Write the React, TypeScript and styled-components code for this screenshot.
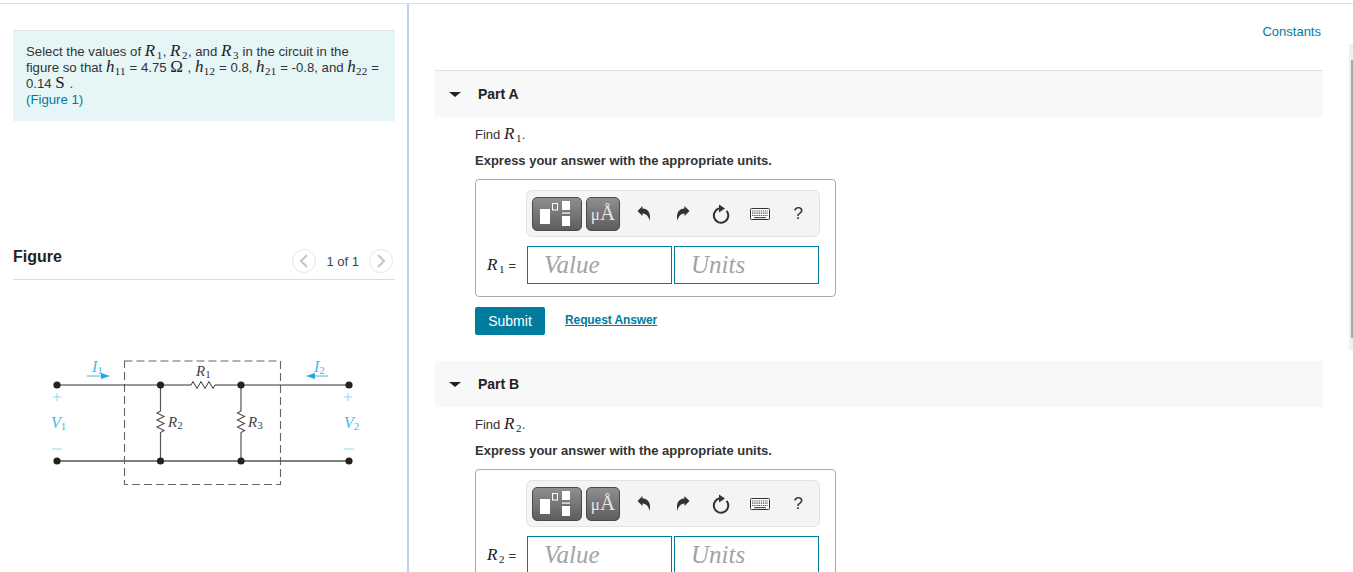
import React from 'react';
import styled, { createGlobalStyle } from 'styled-components';

const Global = createGlobalStyle`
  html, body { margin: 0; padding: 0; height: 572px; overflow: hidden; background: #fff; }
  body { font-family: "Liberation Sans", Arial, sans-serif; font-size: 13px; color: #333; }
`;

const Page = styled.div`
  position: relative;
  width: 1353px;
  height: 572px;
  overflow: hidden;
  padding-top: 3px;
  box-sizing: border-box;
`;
const Columns = styled.div`
  display: flex;
  height: 569px;
  border-top: 1px solid #dfdfdf;
`;
const LeftPane = styled.aside`
  width: 382px;
  flex: none;
  padding: 26px 12px 0 13px;
  border-right: 2px solid #bfd3e6;
  overflow: hidden;
`;
const Instructions = styled.div`
  height: 77px;
  padding: 13px 0 0 13px;
  border-top: 1px solid #dfe5e6;
  background: #e6f5f6;
  line-height: 16px;
  font-size: 13.2px;
  white-space: nowrap;
  color: #333;
`;
const TextLink = styled.a`
  color: #007c9e;
`;
const FigureHeader = styled.div`
  display: flex;
  align-items: center;
  justify-content: space-between;
  height: 35px;
  margin-top: 124px;
  border-bottom: 1px solid #dcdcdc;
  box-sizing: border-box;
`;
const FigureTitle = styled.h2`
  margin: 0 0 11px;
  font-size: 16px;
  line-height: 20px;
  font-weight: 700;
  color: #222;
`;
const Pager = styled.div`
  display: flex;
  align-items: center;
  gap: 10px;
  margin: 0 2px 2px 0;
  color: #2a4a5e;
  font-size: 13px;
`;
const PagerButton = styled.span`
  width: 22px;
  height: 22px;
  border: 1.5px solid #e6e6e6;
  border-radius: 50%;
  display: flex;
  align-items: center;
  justify-content: center;
`;
const CircuitFigure = styled.svg`
  display: block;
  margin-top: 65px;
`;
const RightPane = styled.main`
  flex: 1;
  padding: 0 30px 0 26px;
  overflow: hidden;
`;
const ConstantsRow = styled.div`
  height: 66px;
  padding: 20px 2px 0 0;
  box-sizing: border-box;
  text-align: right;
  line-height: 16px;
  font-size: 13px;
  color: #007c9e;
`;
const PartHeader = styled.div<{ $ruled?: boolean }>`
  display: flex;
  align-items: center;
  height: 46px;
  background: #f8f8f8;
  border-top: ${p => (p.$ruled ? '1px solid #dfdfdf' : 'none')};
  font-size: 14px;
  font-weight: 700;
  color: #222;
`;
const Caret = styled.span`
  width: 0;
  height: 0;
  margin: 0 17px 0 14px;
  border-left: 6px solid transparent;
  border-right: 6px solid transparent;
  border-top: 5px solid #222;
`;
const PartBody = styled.section`
  padding: 10px 0 26px 40px;
`;
const Line = styled.p<{ $bold?: boolean }>`
  margin: 0 0 10px;
  line-height: 16px;
  font-size: 13px;
  font-weight: ${p => (p.$bold ? 700 : 400)};
  color: #333;
`;
const AnswerBox = styled.div`
  width: 361px;
  height: 118px;
  margin-top: 10px;
  padding: 10px 0 0;
  box-sizing: border-box;
  border: 1px solid #aaa;
  border-radius: 4px;
`;
const Toolbar = styled.div`
  display: flex;
  align-items: center;
  width: 294px;
  height: 47px;
  margin-left: 50px;
  box-sizing: border-box;
  padding-left: 5px;
  background: #f4f4f4;
  border: 1px solid #e3e3e3;
  border-radius: 6px;
`;
const TemplateButton = styled.span<{ $w: number }>`
  display: flex;
  align-items: center;
  justify-content: center;
  width: ${p => p.$w}px;
  height: 34px;
  margin-right: 4px;
  box-sizing: border-box;
  border: 1px solid #4a4a4a;
  border-radius: 5px;
  background: linear-gradient(#8f8f8f, #5d5d5d);
  color: #e6e6e6;
  font-family: "Liberation Serif", serif;
  font-size: 21px;
`;
const Micro = styled.span`
  font-size: 17px;
  padding-top: 3px;
`;
const ToolGroup = styled.div`
  display: flex;
  align-items: center;
  margin-left: 1px;
`;
const ToolIcon = styled.span`
  width: 38.5px;
  display: flex;
  justify-content: center;
  align-items: center;
  font-size: 17px;
  color: #333;
`;
const AnswerRow = styled.div`
  display: flex;
  align-items: center;
  gap: 2px;
  margin: 9px 0 0 11px;
`;
const AnswerLabel = styled.span`
  width: 38px;
  font-size: 13px;
  color: #333;
  white-space: nowrap;
`;
const Field = styled.div`
  width: 145px;
  height: 38px;
  box-sizing: border-box;
  border: 1px solid #007c9e;
  padding-left: 16px;
  font: italic 25px/35px "Liberation Serif", serif;
  color: #a3a3a3;
`;
const Actions = styled.div`
  display: flex;
  align-items: center;
  gap: 20px;
  margin-top: 10px;
`;
const SubmitButton = styled.span`
  width: 70px;
  height: 28px;
  background: #007c9e;
  border-radius: 2px;
  color: #fff;
  font-size: 14px;
  line-height: 28px;
  text-align: center;
`;
const RequestLink = styled.a`
  margin-top: -2px;
  font-size: 12px;
  letter-spacing: -0.1px;
  font-weight: 700;
  text-decoration: underline;
  color: #007c9e;
`;
const MathVar = styled.span<{ $tight?: boolean }>`
  font: italic 17px/0 "Liberation Serif", serif;
  letter-spacing: ${p => (p.$tight ? '0.3px' : '1.7px')};
  color: #222;
  sub { font: normal 11px/0 "Liberation Serif", serif; letter-spacing: 0.3px; vertical-align: -3px; }
`;
const MathRoman = styled.span`
  font: 17px/0 "Liberation Serif", serif;
  letter-spacing: 1px;
  color: #222;
`;
const ScrollTrack = styled.div`
  position: absolute;
  top: 44px;
  right: 0;
  width: 4px;
  height: 306px;
  background: #f0f0f0;
`;
const ScrollThumb = styled.div`
  position: absolute;
  top: 16px;
  right: 0;
  width: 2px;
  height: 278px;
  background: #a8a8a8;
`;

const V = ({ n, s }: { n: string; s?: string }) => (
  <MathVar $tight={n === 'h'}>{n}{s && <sub>{s}</sub>}</MathVar>
);

const Chevron = ({ dir }: { dir: 'l' | 'r' }) => (
  <svg width="10" height="14" viewBox="0 0 10 14" fill="none" stroke="#c4c4c4" strokeWidth="2">
    <path d={dir === 'l' ? 'M8 1 L2 7 L8 13' : 'M2 1 L8 7 L2 13'} />
  </svg>
);

const Undo = ({ flip }: { flip?: boolean }) => (
  <svg width="16" height="17" viewBox="0 0 16 17" style={flip ? { transform: 'scaleX(-1)' } : undefined}>
    <path fill="#333" d="M1.5 6 L6.5 1 V3.6 C11.5 3.6 15.5 7.5 13.5 16 C13 12.5 11 9 6.5 8.6 V11 Z" />
  </svg>
);

const Reset = () => (
  <svg width="18" height="20" viewBox="0 0 18 20" fill="none">
    <path d="M9 4.3 A7.2 7.2 0 1 0 14.5 6.8" stroke="#333" strokeWidth="2" />
    <path d="M7 0.5 L13 4.5 L7 8.5 Z" fill="#333" />
  </svg>
);

const Keyboard = () => (
  <svg width="20" height="12" viewBox="0 0 20 12">
    <rect x="0.5" y="0.5" width="19" height="11" rx="1" fill="#fff" stroke="#333" />
    <path d="M2 3 H18 M2 5.2 H18" stroke="#555" strokeWidth="1.2" strokeDasharray="1.4 .8" />
    <path d="M2 7.5 H18" stroke="#555" strokeWidth="1.2" strokeDasharray="1.4 .8" />
    <path d="M4 9.6 H16" stroke="#555" strokeWidth="1.2" />
  </svg>
);

const TemplateIcon = () => (
  <svg width="30" height="25" viewBox="0 0 30 25" style={{ marginRight: 4 }}>
    <rect x="0" y="8" width="10" height="15" fill="#fff" />
    <rect x="12.5" y="2.5" width="5" height="6.5" fill="none" stroke="#fff" />
    <rect x="22" y="0" width="8" height="9" fill="#fff" />
    <rect x="22" y="11.5" width="8" height="1.2" fill="#fff" />
    <rect x="22" y="15" width="8" height="10" fill="#fff" />
  </svg>
);

const Node = ({ x, y }: { x: number; y: number }) => <circle cx={x} cy={y} r="3.6" fill="#222" />;
const CyanT = styled.text`
  font: italic 16px "Liberation Serif", serif;
  fill: #3bbcec;
`;
const InkT = styled.text`
  font: italic 15px "Liberation Serif", serif;
  fill: #444;
`;

const Circuit = () => (
  <CircuitFigure width="382" height="150" viewBox="13 345 382 150">
    <rect x="124.5" y="361" width="156" height="123.5" fill="none" stroke="#666" strokeWidth="1.1" strokeDasharray="8 4" />
    <path d="M57 385 H191 l2 -3.5 l4 7 l4 -7 l4 7 l4 -7 l4 7 l2 -3.5 H349" fill="none" stroke="#333" strokeWidth="1" />
    <path d="M57 461 H349" stroke="#555" strokeWidth="1.3" />
    <path d="M160.5 385 V411 l-3.5 2 l7 3.5 l-7 3.5 l7 3.5 l-7 3.5 l7 3.5 l-3.5 2 V461" fill="none" stroke="#555" strokeWidth="1.2" />
    <path d="M241 385 V411 l-3.5 2 l7 3.5 l-7 3.5 l7 3.5 l-7 3.5 l7 3.5 l-3.5 2 V461" fill="none" stroke="#555" strokeWidth="1.2" />
    {[57, 160.5, 241, 349].map(x => <Node key={`t${x}`} x={x} y={385} />)}
    {[57, 160.5, 241, 349].map(x => <Node key={`b${x}`} x={x} y={461} />)}
    <InkT x="196" y="376">R<tspan fontSize="11" dy="2" fontStyle="normal">1</tspan></InkT>
    <InkT x="168" y="427">R<tspan fontSize="11" dy="2" fontStyle="normal">2</tspan></InkT>
    <InkT x="248" y="427">R<tspan fontSize="11" dy="2" fontStyle="normal">3</tspan></InkT>
    <CyanT x="92" y="372">I<tspan fontSize="11" dy="2" fontStyle="normal">1</tspan></CyanT>
    <CyanT x="314" y="372">I<tspan fontSize="11" dy="2" fontStyle="normal">2</tspan></CyanT>
    <path d="M87 376 H103" stroke="#3bbcec" />
    <path d="M101 373 L110 376 L101 379 Z" fill="#1ea9e6" />
    <path d="M314 376 H328" stroke="#3bbcec" />
    <path d="M315 373 L306 376 L315 379 Z" fill="#1ea9e6" />
    <path d="M53 397 H61 M57 393 V401 M344 397 H352 M348 393 V401" stroke="#8fd6f2" />
    <CyanT x="51" y="428">V<tspan fontSize="11" dy="2" fontStyle="normal">1</tspan></CyanT>
    <CyanT x="344" y="428">V<tspan fontSize="11" dy="2" fontStyle="normal">2</tspan></CyanT>
    <path d="M52 449 H62 M344 449 H354" stroke="#8fd6f2" />
  </CircuitFigure>
);

const Part = ({ title, index, ruled, showActions }: { title: string; index: string; ruled?: boolean; showActions?: boolean }) => (
  <>
    <PartHeader $ruled={ruled}><Caret />{title}</PartHeader>
    <PartBody>
      <Line>Find <V n="R" s={index} />.</Line>
      <Line $bold>Express your answer with the appropriate units.</Line>
      <AnswerBox>
        <Toolbar>
          <TemplateButton $w={50}><TemplateIcon /></TemplateButton>
          <TemplateButton $w={34}><Micro>μ</Micro>Å</TemplateButton>
          <ToolGroup>
            <ToolIcon><Undo /></ToolIcon>
            <ToolIcon><Undo flip /></ToolIcon>
            <ToolIcon><Reset /></ToolIcon>
            <ToolIcon><Keyboard /></ToolIcon>
            <ToolIcon>?</ToolIcon>
          </ToolGroup>
        </Toolbar>
        <AnswerRow>
          <AnswerLabel><V n="R" s={index} /> =</AnswerLabel>
          <Field>Value</Field>
          <Field>Units</Field>
        </AnswerRow>
      </AnswerBox>
      {showActions && (
        <Actions>
          <SubmitButton>Submit</SubmitButton>
          <RequestLink>Request Answer</RequestLink>
        </Actions>
      )}
    </PartBody>
  </>
);

export default function App() {
  return (
    <Page>
      <Global />
      <Columns>
        <LeftPane>
          <Instructions>
            Select the values of <V n="R" s="1" />, <V n="R" s="2" />, and <V n="R" s="3" /> in the circuit in the
            <br />
            figure so that <V n="h" s="11" /> = 4.75 <MathRoman>Ω</MathRoman> , <V n="h" s="12" /> = 0.8, <V n="h" s="21" /> = -0.8, and <V n="h" s="22" /> =
            <br />
            0.14 <MathRoman>S</MathRoman> .
            <br />
            <TextLink>(Figure 1)</TextLink>
          </Instructions>
          <FigureHeader>
            <FigureTitle>Figure</FigureTitle>
            <Pager>
              <PagerButton><Chevron dir="l" /></PagerButton>
              <span>1 of 1</span>
              <PagerButton><Chevron dir="r" /></PagerButton>
            </Pager>
          </FigureHeader>
          <Circuit />
        </LeftPane>
        <RightPane>
          <ConstantsRow>Constants</ConstantsRow>
          <Part title="Part A" index="1" ruled showActions />
          <Part title="Part B" index="2" />
        </RightPane>
      </Columns>
      <ScrollTrack><ScrollThumb /></ScrollTrack>
    </Page>
  );
}
